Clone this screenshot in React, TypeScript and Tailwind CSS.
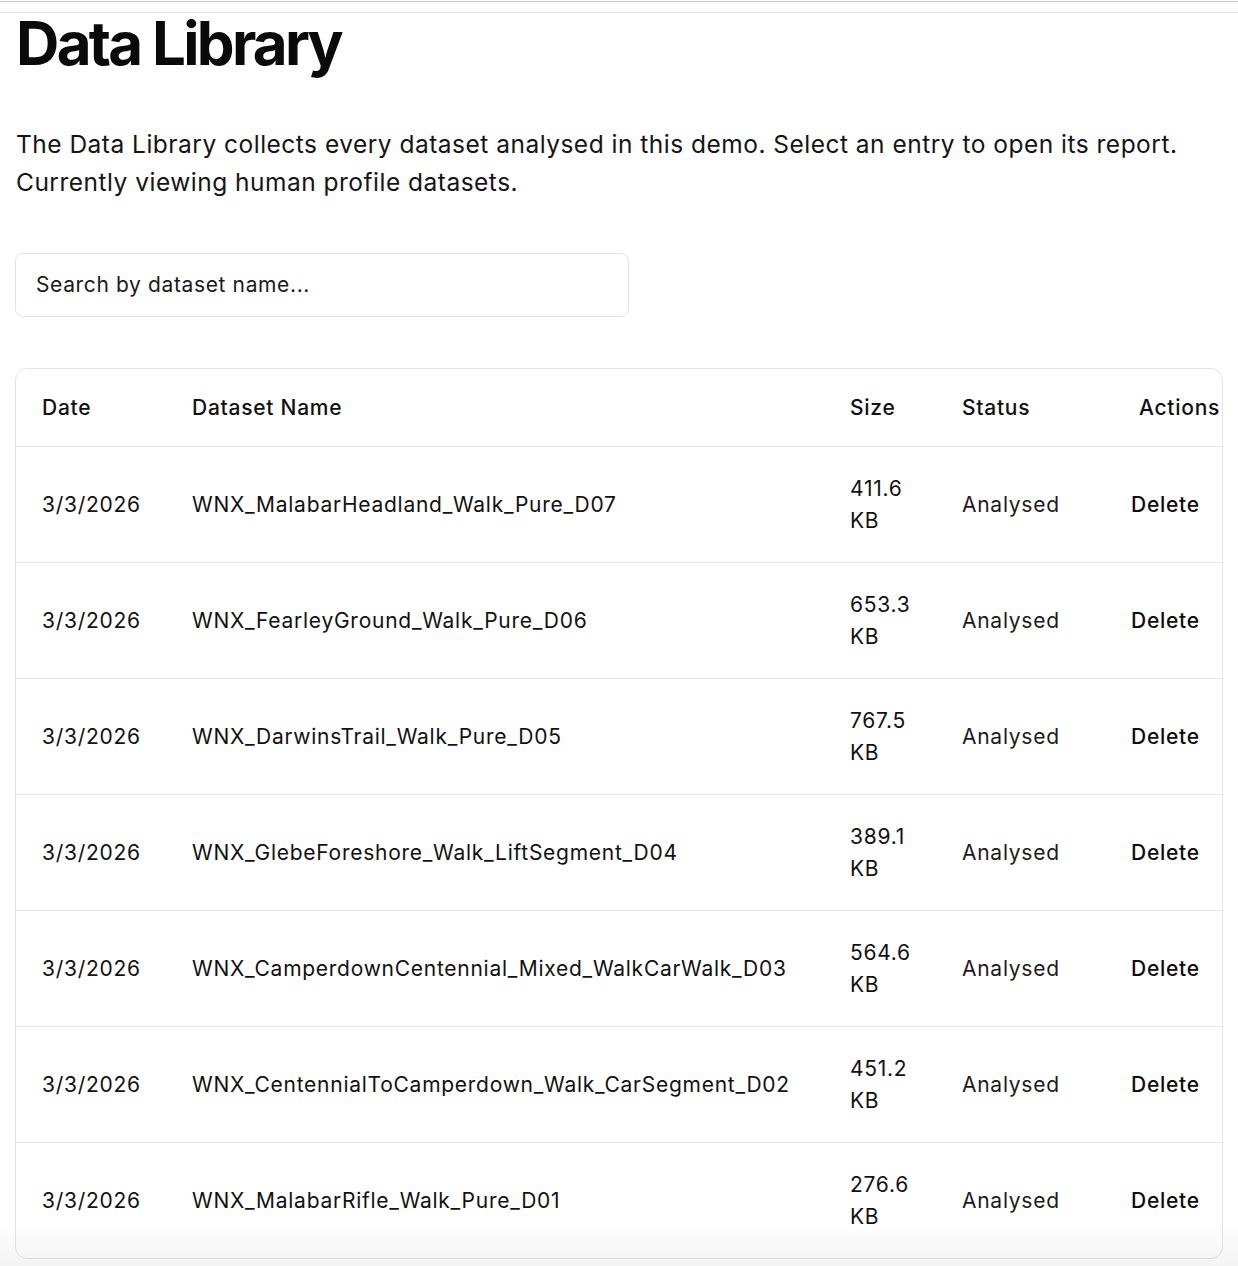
import React from "react";

interface Dataset {
  date: string;
  name: string;
  size: string;
  status: string;
}

const datasets: Dataset[] = [
  { date: "3/3/2026", name: "WNX_MalabarHeadland_Walk_Pure_D07", size: "411.6 KB", status: "Analysed" },
  { date: "3/3/2026", name: "WNX_FearleyGround_Walk_Pure_D06", size: "653.3 KB", status: "Analysed" },
  { date: "3/3/2026", name: "WNX_DarwinsTrail_Walk_Pure_D05", size: "767.5 KB", status: "Analysed" },
  { date: "3/3/2026", name: "WNX_GlebeForeshore_Walk_LiftSegment_D04", size: "389.1 KB", status: "Analysed" },
  { date: "3/3/2026", name: "WNX_CamperdownCentennial_Mixed_WalkCarWalk_D03", size: "564.6 KB", status: "Analysed" },
  { date: "3/3/2026", name: "WNX_CentennialToCamperdown_Walk_CarSegment_D02", size: "451.2 KB", status: "Analysed" },
  { date: "3/3/2026", name: "WNX_MalabarRifle_Walk_Pure_D01", size: "276.6 KB", status: "Analysed" },
];

export default function App() {
  return (
    <div
      className="min-h-screen bg-white text-[#111111]"
      style={{ fontFamily: "Inter, 'Noto Sans', 'Liberation Sans', sans-serif" }}
    >
      <div className="mt-px h-[12px] border-t border-b border-t-[#c9c9c9] border-b-[#e2e2e2]" />

      <main className="px-[15px]">
        <h1 className="pl-px text-[60px] leading-[60px] font-bold tracking-[-0.045em] text-[#0a0a0a]">
          Data Library
        </h1>

        <p className="mt-[52px] pl-px text-[24.5px] leading-[38.4px] tracking-[0.02em] text-[#151515]">
          The Data Library collects every dataset analysed in this demo. Select an entry to open its report.
          <br />
          Currently viewing human profile datasets.
        </p>

        <input
          type="text"
          placeholder="Search by dataset name..."
          className="mt-[51px] block h-[64px] w-[614px] rounded-lg border border-[#e4e4e4] bg-white px-[20px] text-[21px] tracking-[0.03em] text-[#111111] placeholder:text-[#1a1a1a] outline-none"
        />

        <div className="mt-[51px] w-[1208px] overflow-hidden rounded-xl border border-[#e4e4e4]">
          <table className="w-[1240px] table-fixed border-collapse text-left text-[21px] leading-[32px] tracking-[0.035em]">
            <colgroup>
              <col className="w-[150px]" />
              <col className="w-[658px]" />
              <col className="w-[112px]" />
              <col className="w-[169px]" />
              <col className="w-[151px]" />
            </colgroup>
            <thead>
              <tr className="h-[78px] border-b border-[#e6e6e6]">
                <th className="pl-[26px] font-medium">Date</th>
                <th className="pl-[26px] font-medium">Dataset Name</th>
                <th className="pl-[26px] font-medium">Size</th>
                <th className="pl-[26px] font-medium">Status</th>
                <th className="pl-[34px] font-medium">Actions</th>
              </tr>
            </thead>
            <tbody>
              {datasets.map((d, i) => (
                <tr
                  key={d.name}
                  className={i < datasets.length - 1 ? "h-[116px] border-b border-[#e6e6e6]" : "h-[115px]"}
                >
                  <td className="pl-[26px]">{d.date}</td>
                  <td className="pl-[26px] whitespace-nowrap">{d.name}</td>
                  <td className="px-[26px]">{d.size}</td>
                  <td className="pl-[26px] text-[#1c1c1c]">{d.status}</td>
                  <td className="pl-[26px]">
                    <button type="button" className="font-medium text-[#0d0d0d]">
                      Delete
                    </button>
                  </td>
                </tr>
              ))}
            </tbody>
          </table>
        </div>
        <div className="h-10" />
      </main>

      <div className="pointer-events-none fixed inset-x-0 bottom-0 h-[44px] bg-gradient-to-b from-white/0 to-black/[0.045]" />
    </div>
  );
}
